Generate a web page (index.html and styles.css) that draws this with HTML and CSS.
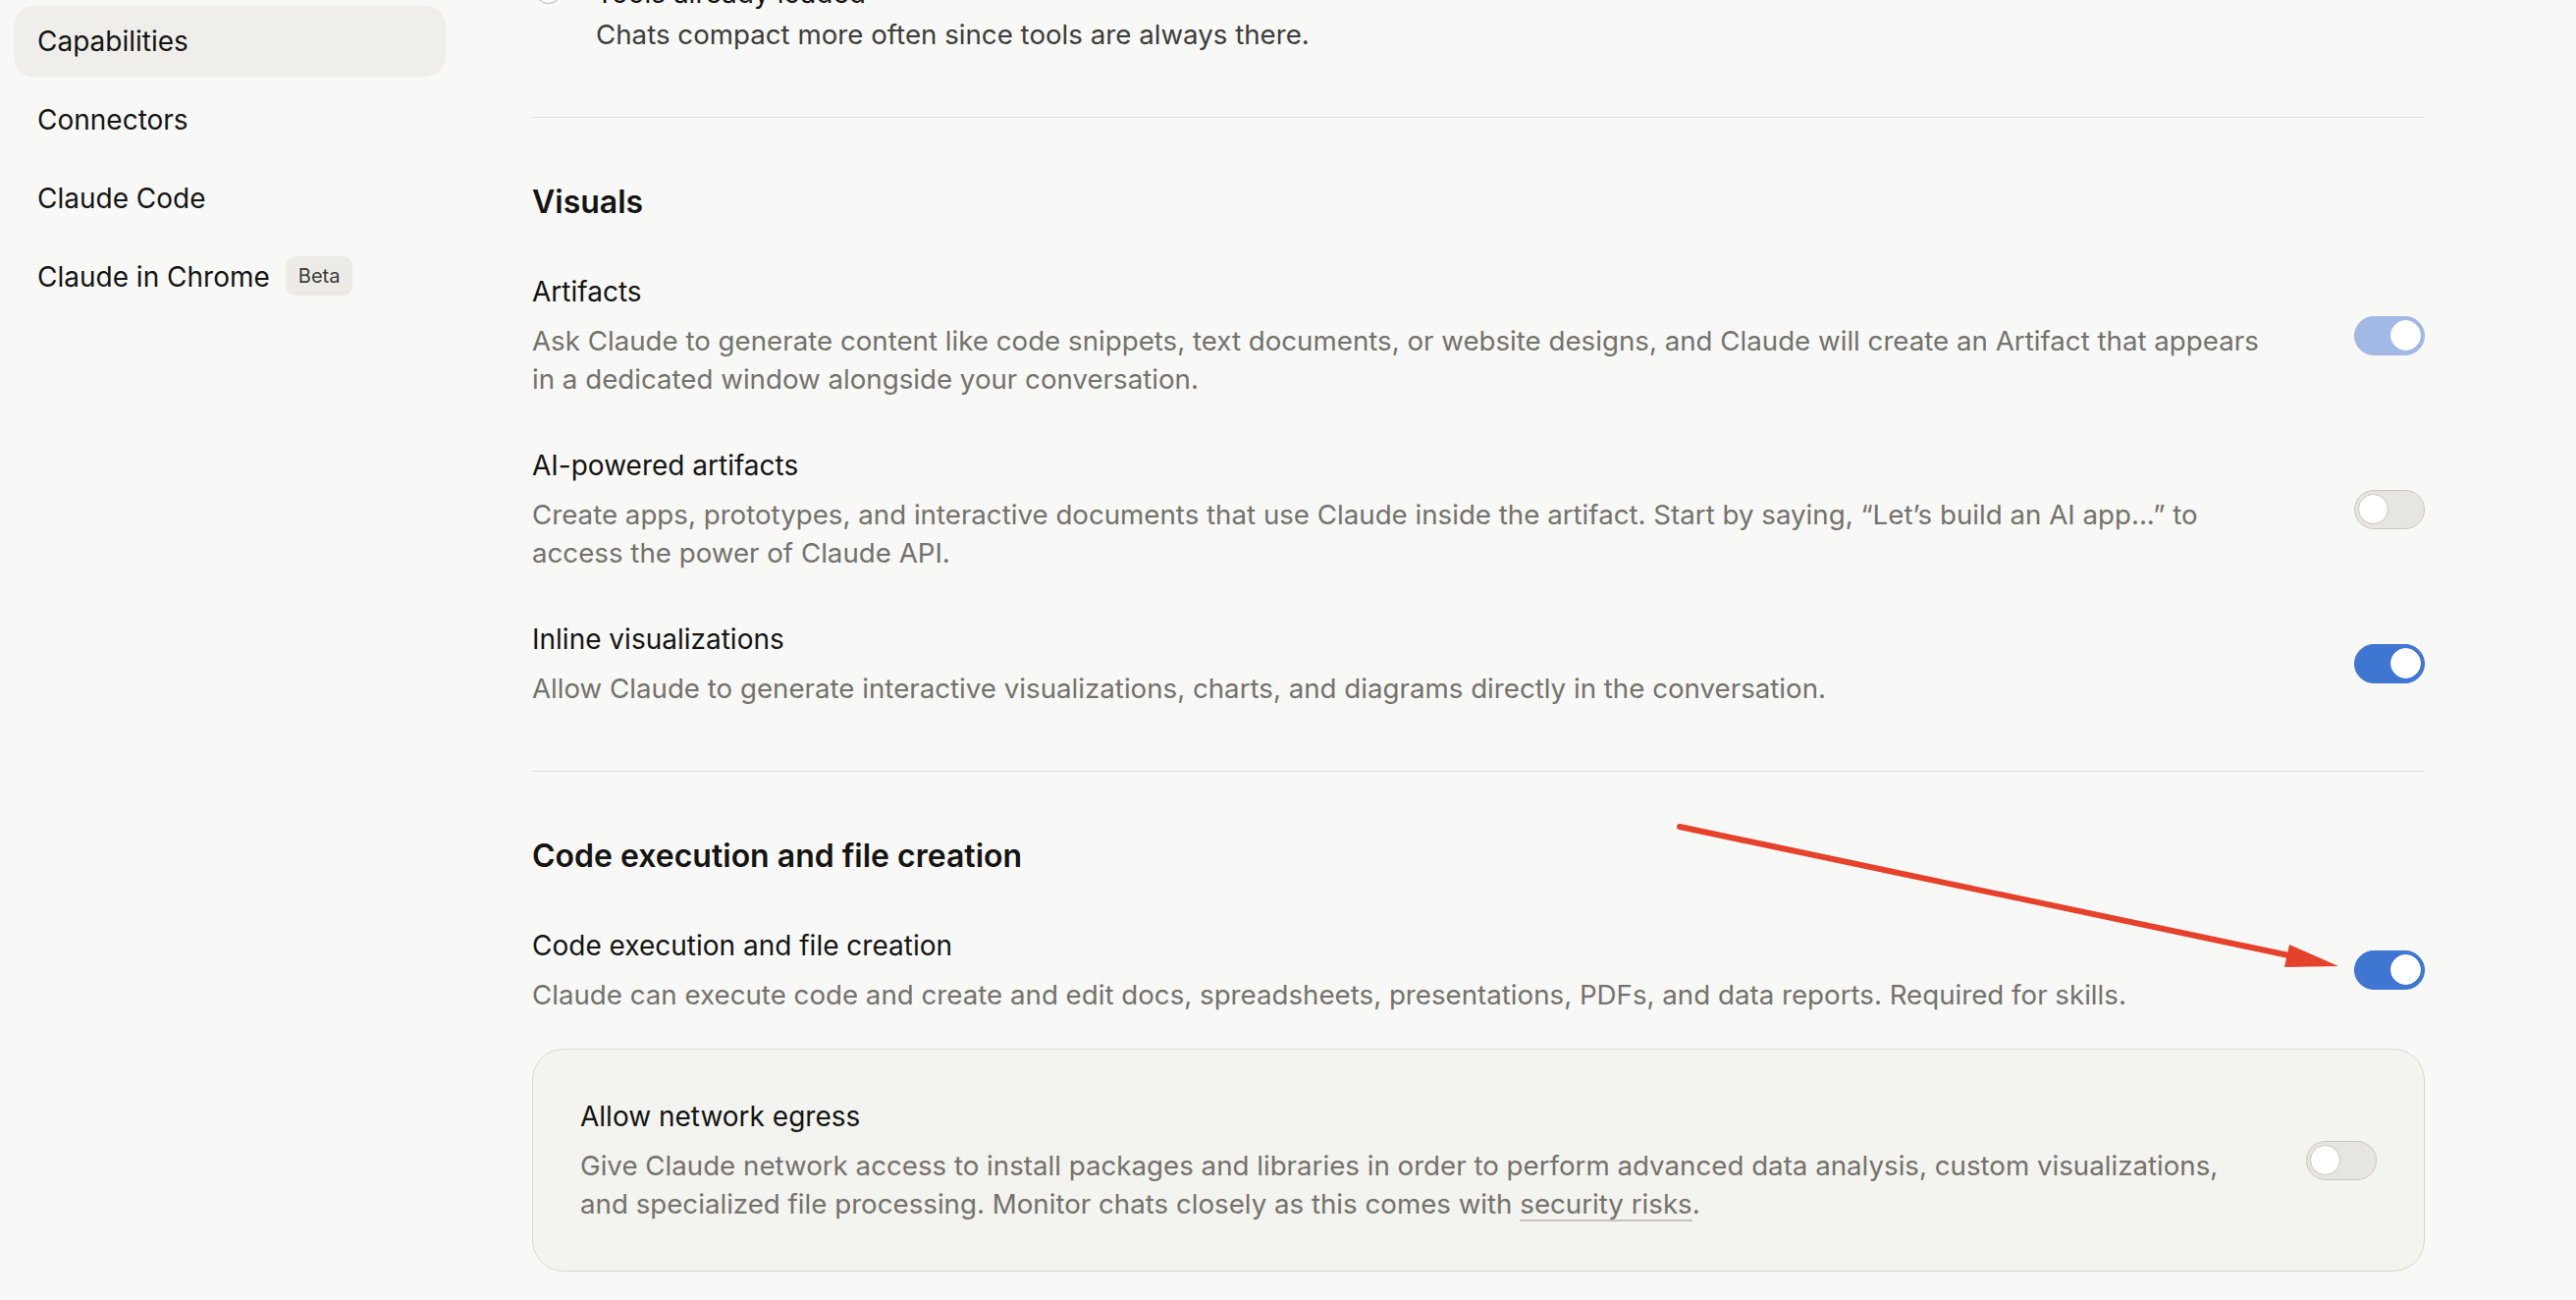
FILE: index.html
```html
<!DOCTYPE html>
<html lang="en">
<head>
  <meta charset="UTF-8">
  <title>Settings - Capabilities</title>
  <link rel="stylesheet" href="styles.css">
</head>
<body>

  <div class="layout">

    <!-- Settings navigation -->
    <nav class="sidebar">
      <a class="nav-item active">Capabilities</a>
      <a class="nav-item">Connectors</a>
      <a class="nav-item">Claude Code</a>
      <a class="nav-item">Claude in Chrome <span class="badge">Beta</span></a>
    </nav>

    <!-- Settings content -->
    <main class="content">

      <div class="radio-option">
        <span class="radio"></span>
        <div>
          <div class="radio-label">Tools already loaded</div>
          <div class="radio-desc">Chats compact more often since tools are always there.</div>
        </div>
      </div>

      <hr class="divider">

      <section class="group">
        <h2>Visuals</h2>

        <div class="setting">
          <div class="setting-text">
            <div class="setting-label">Artifacts</div>
            <p class="setting-desc">Ask Claude to generate content like code snippets, text documents, or website designs, and Claude will create an Artifact that appears in a dedicated window alongside your conversation.</p>
          </div>
          <span class="toggle on dim"><span class="knob"></span></span>
        </div>

        <div class="setting">
          <div class="setting-text">
            <div class="setting-label">AI-powered artifacts</div>
            <p class="setting-desc">Create apps, prototypes, and interactive documents that use Claude inside the artifact. Start by saying, “Let’s build an AI app...” to access the power of Claude API.</p>
          </div>
          <span class="toggle"><span class="knob"></span></span>
        </div>

        <div class="setting">
          <div class="setting-text">
            <div class="setting-label">Inline visualizations</div>
            <p class="setting-desc">Allow Claude to generate interactive visualizations, charts, and diagrams directly in the conversation.</p>
          </div>
          <span class="toggle on"><span class="knob"></span></span>
        </div>
      </section>

      <hr class="divider">

      <section class="group">
        <h2>Code execution and file creation</h2>

        <div class="setting has-card">
          <div class="setting-text">
            <div class="setting-label">Code execution and file creation</div>
            <p class="setting-desc">Claude can execute code and create and edit docs, spreadsheets, presentations, PDFs, and data reports. Required for skills.</p>
          </div>
          <span class="toggle on"><span class="knob"></span></span>
        </div>

        <div class="card">
          <div class="setting">
            <div class="setting-text">
              <div class="setting-label">Allow network egress</div>
              <p class="setting-desc">Give Claude network access to install packages and libraries in order to perform advanced data analysis, custom visualizations, and specialized file processing. Monitor chats closely as this comes with <a class="link">security risks</a>.</p>
            </div>
            <span class="toggle"><span class="knob"></span></span>
          </div>
        </div>
      </section>

    </main>
  </div>

  <!-- red annotation arrow drawn over the page -->
  <svg class="annotation" width="2624" height="1324" viewBox="0 0 2624 1324">
    <line x1="1711" y1="842" x2="2336" y2="974" stroke="#e6412b" stroke-width="6" stroke-linecap="round"/>
    <polygon points="2382,984 2332,962 2327,985" fill="#e6412b"/>
  </svg>

</body>
</html>
```

FILE: styles.css
```css
* {
  margin: 0;
  padding: 0;
  box-sizing: border-box;
}

body {
  font-family: 'Inter', 'Noto Sans', sans-serif;
  background: #f8f8f6;
  color: #141413;
  height: 1324px;
  overflow: hidden;
  position: relative;
}

.layout {
  display: flex;
  height: 100%;
}

/* sidebar */

.sidebar {
  width: 440px;
  margin-left: 14px;
  padding-top: 6px;
  display: flex;
  flex-direction: column;
  gap: 8px;
}

.nav-item {
  display: flex;
  align-items: center;
  height: 72px;
  padding: 0 24px;
  border-radius: 20px;
  font-size: 28px;
  line-height: 40px;
  color: #141413;
}

.nav-item.active {
  background: #efeeea;
}

.badge {
  margin-left: 16px;
  height: 40px;
  padding: 0 13px;
  border-radius: 10px;
  background: #ecebe6;
  color: #3d3d3a;
  font-size: 20px;
  line-height: 40px;
  margin-top: -2px;
}

/* content */

.content {
  width: 1928px;
  margin-left: 88px;
}

.radio-option {
  display: flex;
  gap: 35px;
  margin-top: -27px;
  padding-left: 3px;
}

.radio {
  width: 27px;
  height: 27px;
  margin-top: 4px;
  border: 1.5px solid #b5b4ae;
  border-radius: 50%;
  background: #fff;
  flex-shrink: 0;
}

.radio-label {
  font-size: 28px;
  line-height: 40px;
}

.radio-desc {
  margin-top: 3px;
  font-size: 27.7px;
  line-height: 39px;
  color: #3d3d3a;
}

.divider {
  border: none;
  border-top: 1px solid #e0dfda;
  margin: 64px 0;
}

.group h2 {
  font-size: 32px;
  line-height: 44px;
  font-weight: 600;
  margin-top: 1px;
  margin-bottom: 49px;
}

.setting {
  display: flex;
  align-items: center;
  gap: 78px;
  margin-bottom: 48px;
}

.setting:last-child {
  margin-bottom: 0;
}

.setting.has-card {
  margin-bottom: 35px;
}

.setting-text {
  flex: 1;
}

.setting-label {
  font-size: 28px;
  line-height: 40px;
}

.setting-desc {
  margin-top: 11px;
  font-size: 27.7px;
  line-height: 39px;
  color: #73726c;
}

.link {
  text-decoration: underline;
  text-decoration-color: #c4c3bd;
  text-decoration-thickness: 2px;
  text-underline-offset: 6px;
}

/* toggles */

.toggle {
  position: relative;
  width: 72px;
  height: 40px;
  border-radius: 20px;
  background: #e6e5e0;
  border: 1.5px solid #c8c7c1;
  flex-shrink: 0;
}

.toggle .knob {
  position: absolute;
  top: 3px;
  left: 3px;
  width: 31px;
  height: 31px;
  border-radius: 50%;
  background: #fff;
  border: 1.5px solid #c8c7c1;
}

.toggle.on {
  background: #3f76d1;
  border-color: #3f76d1;
}

.toggle.on .knob {
  left: auto;
  right: 3px;
  border-color: #fff;
}

.toggle.on.dim {
  background: #a1b9e4;
  border-color: #a1b9e4;
}

/* nested card */

.card {
  padding: 48px;
  border: 1.5px solid #d9d8d3;
  border-radius: 32px;
  background: #f3f3ef;
}

.annotation {
  position: absolute;
  top: 0;
  left: 0;
  pointer-events: none;
}
```
